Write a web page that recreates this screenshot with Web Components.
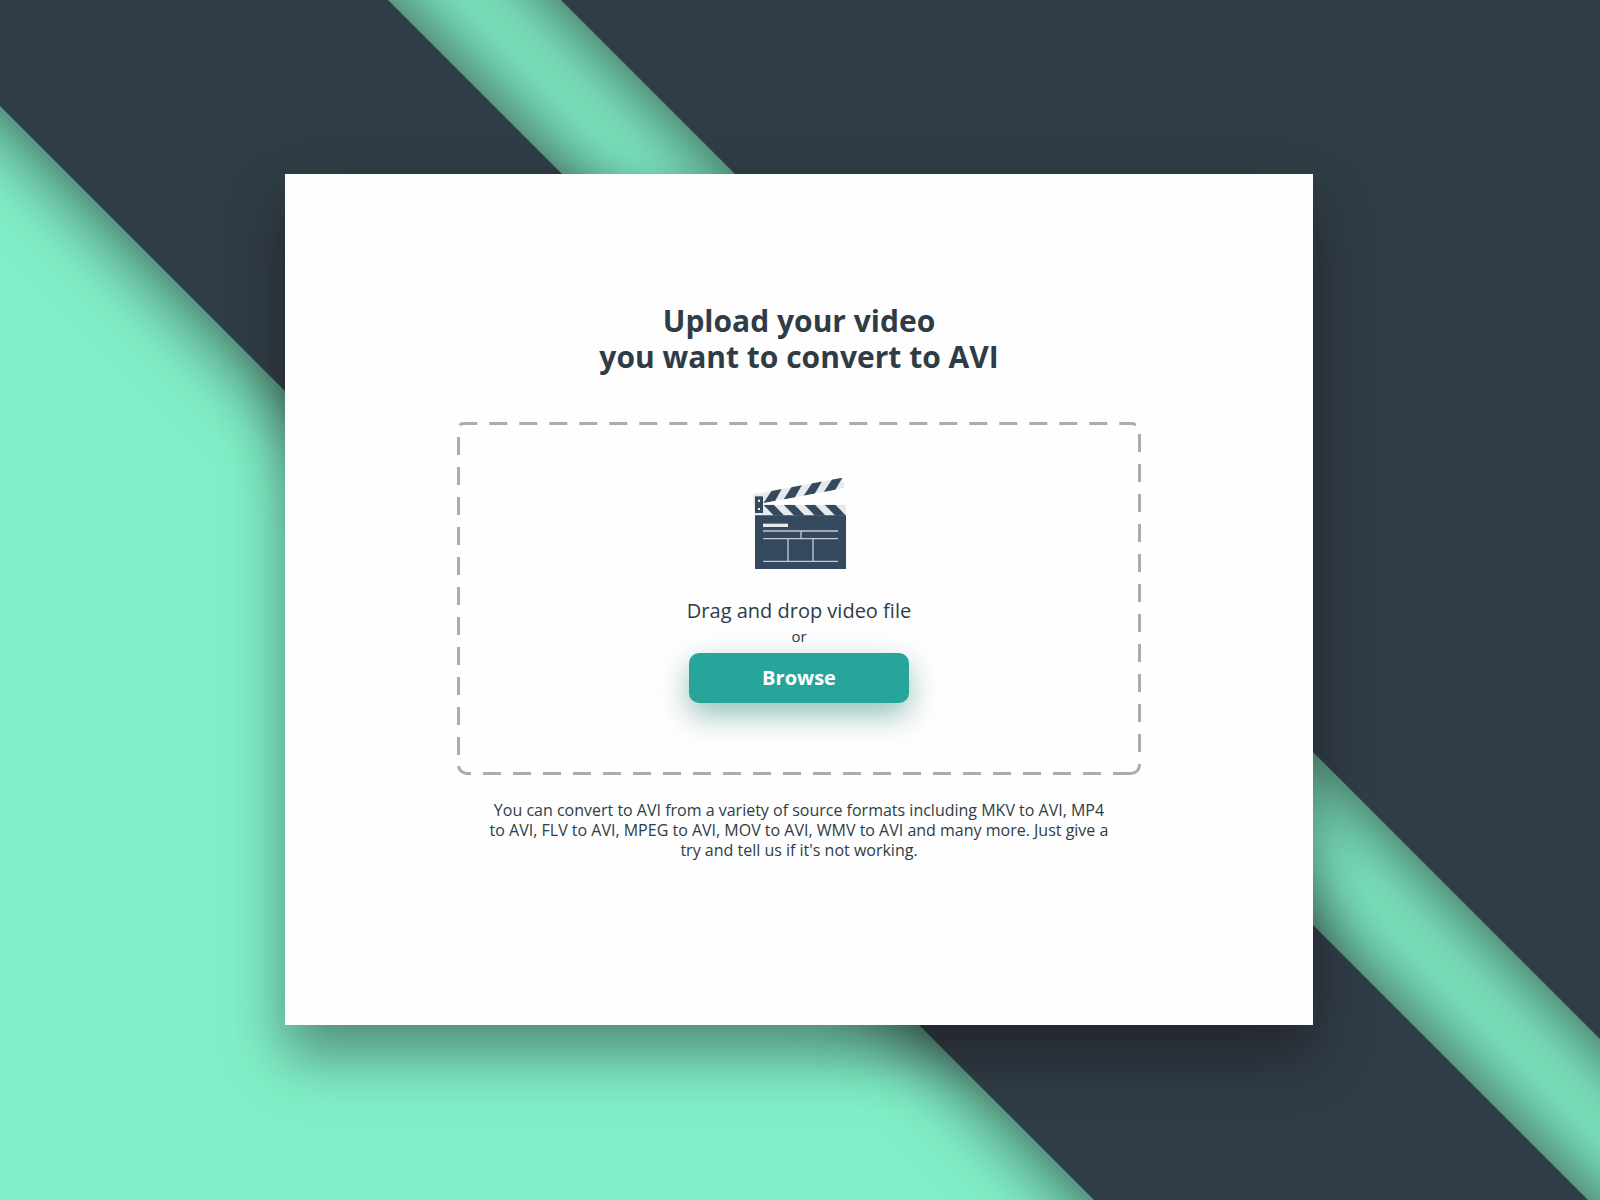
<!DOCTYPE html>
<html lang="en">
<head>
<meta charset="utf-8">
<title>Convert to AVI</title>
<style>
html,body{margin:0;height:100%}
body{font-family:"Open Sans",sans-serif;color:#2f3c45;background:#80efc7}
</style>
</head>
<body>
<upload-page>
  <upload-card>
    <h1 slot="title">Upload your video<br>you want to convert to AVI</h1>
    <drop-zone></drop-zone>
    <p slot="note">You can convert to AVI from a variety of source formats including MKV to AVI, MP4 to AVI, FLV to AVI, MPEG to AVI, MOV to AVI, WMV to AVI and many more. Just give a try and tell us if it's not working.</p>
  </upload-card>
</upload-page>
<script>
class BaseElement extends HTMLElement {
  constructor() {
    super();
    this.attachShadow({mode: "open"}).innerHTML = this.constructor.markup;
  }
}

class DiagonalBackdrop extends BaseElement {
  static markup = `
<style>
:host{display:block;overflow:hidden}
svg{display:block;width:100%;height:100%}
</style>
<svg viewBox="0 0 1600 1200" preserveAspectRatio="xMidYMid slice" aria-hidden="true">
  <defs><filter id="soft" filterUnits="userSpaceOnUse" x="-300" y="-300" width="2300" height="1900" color-interpolation-filters="sRGB"><feGaussianBlur stdDeviation="36"/></filter></defs>
  <rect x="-300" y="-300" width="2300" height="1900" fill="#80efc7"/>
  <g fill="#10040c" fill-opacity=".6">
    <path filter="url(#soft)" d="M-421-300H102L2002 1600H1479Z"/>
    <path filter="url(#soft)" d="M247-300H2400V1600H2147Z"/>
  </g>
  <g fill="#303d46">
    <path d="M-406-300H88L1988 1600H1494Z"/>
    <path d="M261-300H2400V1600H2161Z"/>
  </g>
</svg>`;
}

class UploadPage extends BaseElement {
  static markup = `
<style>
:host{display:grid;min-height:100vh;overflow:hidden}
diagonal-backdrop,main{grid-area:1/1;min-width:0}
diagonal-backdrop{height:100%;min-height:0;contain:size}
main{display:grid;position:relative;padding:174px 287px 175px 285px}
</style>
<diagonal-backdrop></diagonal-backdrop>
<main><slot></slot></main>`;
}

class UploadCard extends BaseElement {
  static markup = `
<style>
:host{display:flex;flex-direction:column;align-items:center;justify-content:center;padding-bottom:36px;background:#fefefe;box-shadow:0 30px 54px rgba(16,4,12,.42)}
::slotted(h1){margin:0 0 47px;font-size:30px;line-height:36px;font-weight:700;text-align:center}
::slotted(p){margin:25px 0 0;max-width:624px;font-size:16px;line-height:20px;text-align:center}
::slotted(drop-zone){width:100%;max-width:684px}
</style>
<slot name="title"></slot>
<slot></slot>
<slot name="note"></slot>`;
}

class ClapperIcon extends BaseElement {
  static markup = `
<style>
:host{display:block;width:94px;height:92px}
svg{display:block;width:100%;height:100%}
</style>
<svg viewBox="36 36 282 276" overflow="visible" aria-hidden="true">
  <defs>
    <clipPath id="arm"><path d="M39 88L307 38L314 69L69 115L45 112Z"/></clipPath>
    <clipPath id="bar"><path d="M69 119H318V152H69Z"/></clipPath>
  </defs>
  <path fill="#e6e9ee" d="M39 88L307 38L314 69L69 115V119H318V152H45Z"/>
  <path fill="#fefefe" d="M69 115L314 69L318 119H72Z"/>
  <g fill="#34495e">
    <g clip-path="url(#arm)">
      <path d="M70 115L97 74L127 69L105 108Z"/>
      <path d="M130 105L156 64L187 58L164 98Z"/>
      <path d="M190 94L217 53L247 47L224 86Z"/>
      <path d="M250 83L277 42L309 35L285 76Z"/>
    </g>
    <g clip-path="url(#bar)">
      <path d="M70 119H101L133 152H102Z"/>
      <path d="M131 119H163L195 152H163Z"/>
      <path d="M193 119H225L257 152H225Z"/>
      <path d="M254 119H286L318 152H286Z"/>
    </g>
    <path d="M45 94H69V144H45Z"/>
    <path d="M45 151H318V312H45Z"/>
  </g>
  <path fill="#fff" d="M54 104h6v6h-6zM54 129h6v6h-6z"/>
  <path fill="#e6e9ee" d="M69 176H144V186H69Z"/>
  <path fill="none" stroke="#c3cad1" stroke-width="4" d="M69 198H294M69 221H294M69 289H294M183 198V221M144 221V289M219 221V289"/>
</svg>`;
}

class BrowseButton extends BaseElement {
  static markup = `
<style>
:host{display:block}
button{display:block;width:220px;height:50px;margin:0;padding:0;border:0;border-radius:10px;background:#27a59a;color:#fff;font:700 20px/28px "Open Sans",sans-serif;box-shadow:0 12px 30px rgba(0,110,95,.42);cursor:pointer}
</style>
<button type="button"><slot></slot></button>`;
}

class DropZone extends BaseElement {
  static markup = `
<style>
:host{display:grid}
.outline,.content{grid-area:1/1;min-width:0}
.outline{display:block;width:100%;height:100%}
.content{display:flex;flex-direction:column;align-items:center;padding:55px 20px 72px;text-align:center}
.lead{margin:28px 0 0;font-size:20px;line-height:28px}
.or{margin:0 0 6px;font-size:15px;line-height:22px}
</style>
<svg class="outline" viewBox="457 422 684 353" preserveAspectRatio="none" fill="none" stroke="#a8adb2" stroke-width="3" stroke-dasharray="18 12" aria-hidden="true">
  <path d="M1131 773.5H467A8.500 8.500 0 0 1 458.500 766"/>
  <path d="M458.500 755V428.500A5 5 0 0 1 463.500 423.500H1133L1136 425"/>
  <path d="M1139.500 434V765A8.500 8.500 0 0 1 1131 773.500"/>
</svg>
<div class="content">
  <clapper-icon></clapper-icon>
  <p class="lead">Drag and drop video file</p>
  <p class="or">or</p>
  <browse-button>Browse</browse-button>
</div>`;
}

customElements.define("diagonal-backdrop", DiagonalBackdrop);
customElements.define("clapper-icon", ClapperIcon);
customElements.define("browse-button", BrowseButton);
customElements.define("drop-zone", DropZone);
customElements.define("upload-card", UploadCard);
customElements.define("upload-page", UploadPage);
</script>
</body>
</html>
